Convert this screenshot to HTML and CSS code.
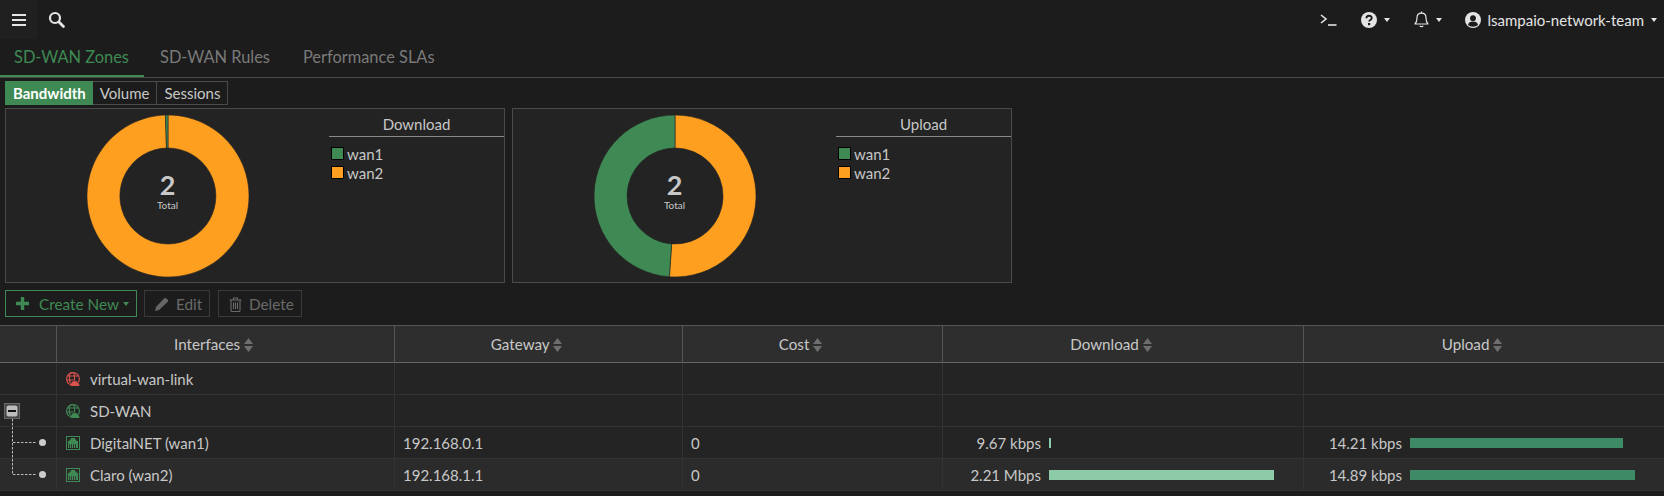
FILE: index.html
```html
<!DOCTYPE html>
<html lang="en">
<head>
  <meta charset="UTF-8">
  <title>SD-WAN Zones</title>
  <link rel="stylesheet" href="styles.css">
</head>
<body>

  <div class="topbar">
    <div class="menu-btn">
      <svg width="14" height="12" viewBox="0 0 14 12"><path d="M0 1h14M0 6h14M0 11h14" stroke="#e4e4e4" stroke-width="2"/></svg>
    </div>
    <div class="search-btn">
      <svg width="17" height="17" viewBox="0 0 17 17"><circle cx="7" cy="7" r="5" fill="none" stroke="#e4e4e4" stroke-width="2.2"/><path d="M10.800 10.800l4.600 4.600" stroke="#e4e4e4" stroke-width="2.800" stroke-linecap="round"/></svg>
    </div>
    <div class="top-right">
      <svg class="top-terminal" width="17" height="12" viewBox="0 0 17 12"><path d="M1 1l5 4-5 4" fill="none" stroke="#e4e4e4" stroke-width="1.600"/><path d="M8 11h8.500" stroke="#e4e4e4" stroke-width="1.600"/></svg>
      <div class="top-item help">
        <svg width="16" height="16" viewBox="0 0 16 16"><circle cx="8" cy="8" r="8" fill="#e4e4e4"/><path d="M5.400 6.200c0-3.200 5.300-3.200 5.300-.2 0 2-2.600 1.900-2.600 3.600" fill="none" stroke="#1c1c1c" stroke-width="1.900"/><rect x="7" y="11" width="2.200" height="2.200" fill="#1c1c1c"/></svg>
        <span class="caret"></span>
      </div>
      <div class="top-item bell">
        <svg width="15" height="17" viewBox="0 0 15 17"><path d="M1 13c1.500-1.500 2-3 2-6 0-3 2-4.800 4.500-4.800S12 4 12 7c0 3 .5 4.500 2 6z" fill="none" stroke="#e4e4e4" stroke-width="1.200" stroke-linejoin="round"/><path d="M7.500 .5v2M5.800 14.800c.6 1.200 2.800 1.200 3.400 0" fill="none" stroke="#e4e4e4" stroke-width="1.200"/></svg>
        <span class="caret"></span>
      </div>
      <div class="top-item user">
        <svg width="16" height="16" viewBox="0 0 16 16"><circle cx="8" cy="8" r="8" fill="#e4e4e4"/><circle cx="8" cy="6.200" r="2.900" fill="#1c1c1c"/><path d="M3 13c.5-2.600 2.400-3.400 5-3.400s4.500.8 5 3.400c-2.800 2.200-7.200 2.200-10 0z" fill="#1c1c1c"/></svg>
        <span class="user-name">lsampaio-network-team</span>
        <span class="caret"></span>
      </div>
    </div>
  </div>

  <div class="tabs">
    <div class="tab active">SD-WAN Zones</div>
    <div class="tab">SD-WAN Rules</div>
    <div class="tab">Performance SLAs</div>
  </div>

  <div class="metric-btns">
    <div class="metric-btn active">Bandwidth</div>
    <div class="metric-btn">Volume</div>
    <div class="metric-btn">Sessions</div>
  </div>

  <div class="charts">
    <div class="chart-panel">
      <div class="donut-area">
        <div class="donut">
          <svg width="164" height="164" viewBox="0 0 164 164">
            <path class="seg-orange" d="M82 1A81 81 0 1 1 79.460 1.040L80.490 34.020A48 48 0 1 0 82 34Z"/>
            <path class="seg-green" d="M79.460 1.040A81 81 0 0 1 82 1L82 34A48 48 0 0 0 80.490 34.020Z"/>
          </svg>
          <div class="donut-label"><div class="donut-num">2</div><div class="donut-text">Total</div></div>
        </div>
      </div>
      <div class="legend">
        <div class="legend-title">Download</div>
        <div class="legend-row"><span class="swatch green"></span>wan1</div>
        <div class="legend-row"><span class="swatch orange"></span>wan2</div>
      </div>
    </div>
    <div class="chart-panel">
      <div class="donut-area">
        <div class="donut">
          <svg width="164" height="164" viewBox="0 0 164 164">
            <path class="seg-orange" d="M82 1A81 81 0 1 1 76.350 162.800L78.650 129.880A48 48 0 1 0 82 34Z"/>
            <path class="seg-green" d="M76.350 162.800A81 81 0 0 1 82 1L82 34A48 48 0 0 0 78.650 129.880Z"/>
          </svg>
          <div class="donut-label"><div class="donut-num">2</div><div class="donut-text">Total</div></div>
        </div>
      </div>
      <div class="legend">
        <div class="legend-title">Upload</div>
        <div class="legend-row"><span class="swatch green"></span>wan1</div>
        <div class="legend-row"><span class="swatch orange"></span>wan2</div>
      </div>
    </div>
  </div>

  <div class="toolbar">
    <div class="tool-btn create">
      <svg width="13" height="13" viewBox="0 0 13 13"><path d="M6.500 0v13M0 6.500h13" stroke="#3f8a54" stroke-width="3.400"/></svg>
      <span>Create New</span><span class="caret green-caret"></span>
    </div>
    <div class="tool-btn edit">
      <svg width="14" height="14" viewBox="0 0 14 14"><path d="M0 14l1-4 8-8.500c.8-.8 1.700-.8 2.400-.1l1.200 1.200c.7.700.7 1.600-.1 2.400L4 13z" fill="#666"/></svg>
      <span>Edit</span>
    </div>
    <div class="tool-btn delete">
      <svg width="13" height="15" viewBox="0 0 13 15"><path d="M.500 3h12M4.500 3V1h4v2M2 3v10.500c0 .5.300 1 1 1h7c.7 0 1-.5 1-1V3M4.500 5.500v6.500M6.500 5.500v6.500M8.500 5.500v6.500" fill="none" stroke="#6a6a6a" stroke-width="1.100"/></svg>
      <span>Delete</span>
    </div>
  </div>

  <table class="zones">
    <colgroup>
      <col class="c-tree"><col class="c-iface"><col class="c-gw"><col class="c-cost"><col class="c-down"><col class="c-up">
    </colgroup>
    <thead>
      <tr>
        <th></th>
        <th>Interfaces <svg class="sort" width="9" height="14" viewBox="0 0 9 14"><path d="M4.500 0L9 6H0zM0 8h9l-4.500 6z"/></svg></th>
        <th>Gateway <svg class="sort" width="9" height="14" viewBox="0 0 9 14"><path d="M4.500 0L9 6H0zM0 8h9l-4.500 6z"/></svg></th>
        <th>Cost <svg class="sort" width="9" height="14" viewBox="0 0 9 14"><path d="M4.500 0L9 6H0zM0 8h9l-4.500 6z"/></svg></th>
        <th>Download <svg class="sort" width="9" height="14" viewBox="0 0 9 14"><path d="M4.500 0L9 6H0zM0 8h9l-4.500 6z"/></svg></th>
        <th>Upload <svg class="sort" width="9" height="14" viewBox="0 0 9 14"><path d="M4.500 0L9 6H0zM0 8h9l-4.500 6z"/></svg></th>
      </tr>
    </thead>
    <tbody>
      <tr>
        <td class="tree"></td>
        <td><div class="iface">
          <svg width="14" height="14" viewBox="0 0 14 14"><g fill="none" stroke="#d9534f" stroke-width="1.100"><circle cx="7" cy="7" r="6.400"/><ellipse cx="6" cy="6" rx="2.600" ry="6"/><path d="M1.500 4h11M.8 8h7"/></g><path d="M5.500 14.500c-1.900 0-2.300-2.800-.3-3.200.4-1.900 2.100-3 4-2.400 1.200-.4 2.800.5 3 2 2 .3 2 3.600 0 3.600z" fill="#d9534f" stroke="#242424" stroke-width=".6"/></svg>
          virtual-wan-link
        </div></td>
        <td></td><td></td><td></td><td></td>
      </tr>
      <tr>
        <td class="tree">
          <svg class="tree-svg" width="56" height="31" viewBox="0 0 56 31"><path d="M12.500 24v7" stroke="#bbb" stroke-dasharray="2.500 1.500"/><rect x="4.500" y="8.500" width="15" height="15" fill="#444" stroke="#666"/><rect x="6.500" y="10.500" width="11" height="11" rx="2" fill="#bdbdbd"/><rect x="8" y="15" width="8" height="2" fill="#111"/></svg>
        </td>
        <td><div class="iface">
          <svg width="14" height="14" viewBox="0 0 14 14"><g fill="none" stroke="#3f8a54" stroke-width="1.100"><circle cx="7" cy="7" r="6.400"/><ellipse cx="6" cy="6" rx="2.600" ry="6"/><path d="M1.500 4h11M.8 8h7"/></g><path d="M5.500 14.500c-1.900 0-2.300-2.800-.3-3.200.4-1.900 2.100-3 4-2.400 1.200-.4 2.800.5 3 2 2 .3 2 3.600 0 3.600z" fill="#3f8a54" stroke="#242424" stroke-width=".6"/></svg>
          SD-WAN
        </div></td>
        <td></td><td></td><td></td><td></td>
      </tr>
      <tr>
        <td class="tree">
          <svg class="tree-svg" width="56" height="31" viewBox="0 0 56 31"><path d="M12.500 0v31M13 15.500h24" stroke="#bbb" stroke-dasharray="2.500 1.500"/><circle cx="42.500" cy="15.500" r="3.500" fill="#ccc"/></svg>
        </td>
        <td><div class="iface">
          <svg width="14" height="14" viewBox="0 0 14 14"><rect x=".5" y=".5" width="13" height="13" fill="none" stroke="#3f8a54"/><path d="M2 12V5h1.500V3.500H5V2h4v1.500h1.500V5H12v7z" fill="#3f8a54"/><path d="M3.500 8v4M5.500 8v4M7.500 8v4M9.500 8v4" stroke="#242424" stroke-width=".8"/></svg>
          DigitalNET (wan1)
        </div></td>
        <td>192.168.0.1</td>
        <td>0</td>
        <td><div class="rate"><span class="rate-val">9.67 kbps</span><span class="bar bar-down bar-w2"></span></div></td>
        <td><div class="rate"><span class="rate-val">14.21 kbps</span><span class="bar bar-up bar-w213"></span></div></td>
      </tr>
      <tr class="alt">
        <td class="tree">
          <svg class="tree-svg" width="56" height="31" viewBox="0 0 56 31"><path d="M12.500 0v15.500M13 15.500h24" stroke="#bbb" stroke-dasharray="2.500 1.500"/><circle cx="42.500" cy="15.500" r="3.500" fill="#ccc"/></svg>
        </td>
        <td><div class="iface">
          <svg width="14" height="14" viewBox="0 0 14 14"><rect x=".5" y=".5" width="13" height="13" fill="none" stroke="#3f8a54"/><path d="M2 12V5h1.500V3.500H5V2h4v1.500h1.500V5H12v7z" fill="#3f8a54"/><path d="M3.500 8v4M5.500 8v4M7.500 8v4M9.500 8v4" stroke="#2b2b2b" stroke-width=".8"/></svg>
          Claro (wan2)
        </div></td>
        <td>192.168.1.1</td>
        <td>0</td>
        <td><div class="rate"><span class="rate-val">2.21 Mbps</span><span class="bar bar-down bar-w225"></span></div></td>
        <td><div class="rate"><span class="rate-val">14.89 kbps</span><span class="bar bar-up bar-w225"></span></div></td>
      </tr>
    </tbody>
  </table>

</body>
</html>
```

FILE: styles.css
```css
html, body { margin: 0; padding: 0; height: 496px; overflow: hidden; }
body { background-color: #1c1c1c; color: #c8c8c8; font-family: Lato, "Open Sans", sans-serif; font-size: 15px; }

/* top bar */
.topbar { display: flex; align-items: center; height: 39px; color: #e4e4e4; }
.menu-btn { width: 37px; height: 39px; display: flex; align-items: center; justify-content: center; background-color: #202020; }
.search-btn { margin-left: 11px; display: flex; }
.top-right { margin-left: auto; display: flex; align-items: center; padding-right: 7px; }
.top-terminal { margin-right: 24px; }
.top-item { display: flex; align-items: center; }
.help { margin-right: 24px; }
.bell { margin-right: 23px; }
.user-name { margin-left: 6px; font-size: 15px; }
.caret { width: 0; height: 0; margin-left: 7px; border-left: 3.5px solid transparent; border-right: 3.5px solid transparent; border-top: 4px solid #e4e4e4; }

/* tabs */
.tabs { display: flex; height: 39px; border-bottom: 1px solid #4a4a4a; box-sizing: border-box; }
.tab { margin-right: 33px; font-size: 16.400px; line-height: 36px; color: #7a7a7a; }
.tab.active { width: 144px; padding-left: 14px; height: 38px; box-sizing: border-box; margin-right: 16px; color: #3f8a54; border-bottom: 2px solid #3f8a54; }

/* bandwidth / volume / sessions */
.metric-btns { display: flex; margin: 3px 0 0 5px; height: 24px; }
.metric-btn { box-sizing: border-box; line-height: 22px; padding: 0 7px; border: 1px solid #4a4a4a; border-left: 0; color: #c8c8c8; }
.metric-btn.active { background-color: #3f8a54; border-color: #3f8a54; color: #fff; font-weight: 700; padding: 0 6px 0 8px; }

/* donut panels */
.charts { display: flex; gap: 7px; margin: 3px 0 0 5px; }
.chart-panel { box-sizing: border-box; width: 500px; height: 175px; display: flex; background-color: #232323; border: 1px solid #4a4a4a; }
.donut-area { width: 323px; display: flex; justify-content: center; padding-top: 5px; }
.donut { position: relative; width: 164px; height: 164px; }
.donut svg { display: block; }
.seg-orange { fill: #ff9f20; stroke: #232323; stroke-width: .6; }
.seg-green { fill: #3f8a54; stroke: #232323; stroke-width: .6; }
.donut-label { position: absolute; left: 0; right: 0; top: 57px; text-align: center; color: #c8c8c8; }
.donut-num { font-size: 27px; font-weight: 700; line-height: 28px; }
.donut-text { font-size: 10px; line-height: 13px; }
.legend { flex: 1; }
.legend-title { height: 27px; line-height: 31px; text-align: center; border-bottom: 1px solid #8a8a8a; margin-bottom: 7px; }
.legend-row { display: flex; align-items: center; height: 19px; padding-left: 2px; }
.swatch { box-sizing: border-box; width: 13px; height: 13px; margin-right: 3px; border: 1px solid #000; }
.swatch.green { background-color: #3f8a54; }
.swatch.orange { background-color: #ff9f20; }

/* toolbar */
.toolbar { display: flex; gap: 7px; margin: 7px 0 8px 5px; height: 27px; }
.tool-btn { box-sizing: border-box; display: flex; align-items: center; border: 1px solid #3a3a3a; color: #6a6a6a; padding: 0 0 0 10px; gap: 7px; font-size: 15.300px; white-space: nowrap; }
.tool-btn svg { flex: none; }
.tool-btn.create { width: 132px; border-color: #3f8a54; color: #3f8a54; gap: 10px; }
.tool-btn.edit { width: 66px; padding-top: 1px; }
.tool-btn.delete { width: 84px; margin-left: 1px; padding-top: 1px; }
.green-caret { border-top-color: #3f8a54; margin-left: -6px; }

/* table */
.zones { width: 1664px; table-layout: fixed; border-collapse: separate; border-spacing: 0; }
.c-tree { width: 57px; }
.c-iface { width: 338px; }
.c-gw { width: 288px; }
.c-cost { width: 260px; }
.c-down { width: 361px; }
.c-up { width: 360px; }
.zones th { box-sizing: border-box; height: 38px; padding: 0 24px 0 0; font-weight: 400; background-color: #2e2e2e; color: #c8c8c8; border-top: 1px solid #555; border-bottom: 1px solid #666; border-right: 1px solid #555; font-size: 15.200px; }
.zones th:last-child, .zones td:last-child { border-right: 0; }
.sort { fill: #6e6e6e; vertical-align: -2px; }
.zones td { box-sizing: border-box; height: 32px; padding: 0 8px; background-color: #242424; border-bottom: 1px solid #333; border-right: 1px solid #333; }
.zones tr.alt td { background-color: #2b2b2b; }
.zones td.tree { padding: 0; }
.tree-svg { display: block; }
.iface { display: flex; align-items: center; gap: 10px; padding-left: 1px; }
.rate { display: flex; align-items: center; gap: 8px; }
.rate-val { width: 90px; text-align: right; }
.bar { display: block; height: 10px; }
.bar-down { background-color: #8ccaa8; }
.bar-up { background-color: #3f8a66; }
.bar-w2 { width: 2px; }
.bar-w213 { width: 213px; }
.bar-w225 { width: 225px; }
```
